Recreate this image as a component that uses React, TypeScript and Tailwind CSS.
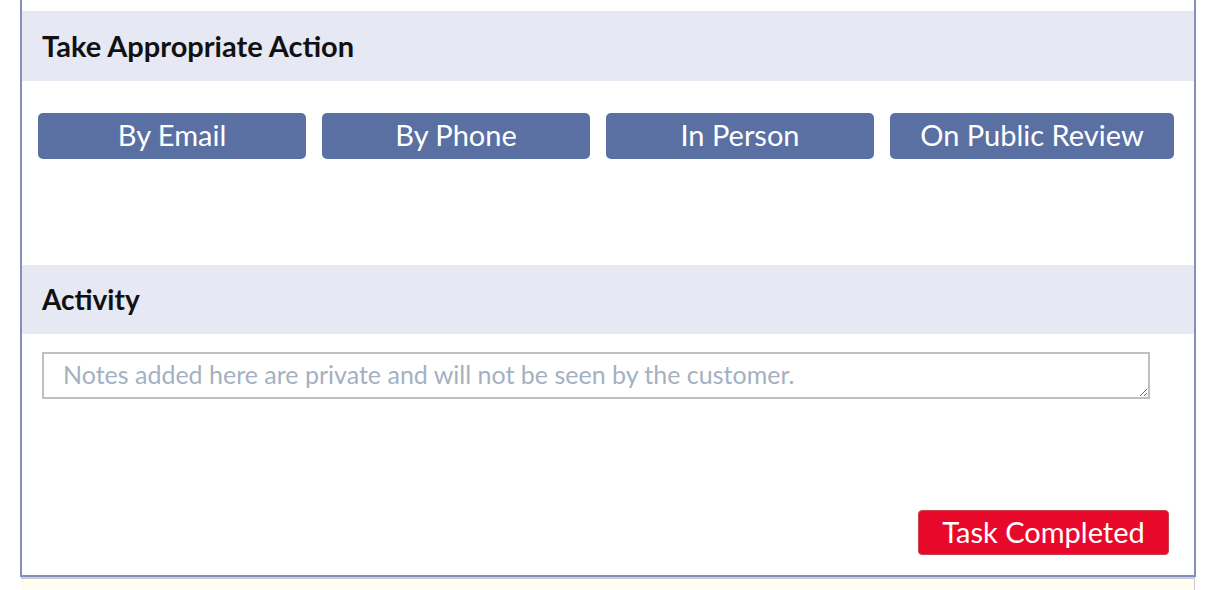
import React from "react";

export default function App() {
  const buttons = ["By Email", "By Phone", "In Person", "On Public Review"];
  return (
    <div className="w-[1220px] h-[590px] bg-white overflow-hidden font-['Lato',sans-serif]">
      <div className="ml-[20px] w-[1176px] border-x-2 border-b-2 border-[#8790b4] pt-[11px] pb-[20px]">
        <div className="h-[70px] bg-[#e6e8f3] pl-[20px] pb-[2px] flex items-center">
          <h2 className="text-[29px] font-bold text-[#111] leading-none">Take Appropriate Action</h2>
        </div>
        <div className="mt-[32px] pl-[16px] pr-[20px] flex">
          {buttons.map((b, i) => (
            <button
              key={b}
              className={`h-[46px] pb-[3px] rounded-[5px] bg-[#5a70a3] text-white text-[29px] leading-none flex items-center justify-center ${
                i < 3 ? "w-[268px] mr-[16px]" : "w-[284px]"
              }`}
            >
              {b}
            </button>
          ))}
        </div>
        <div className="mt-[106px] h-[69px] bg-[#e6e8f3] pl-[20px] pb-[2px] flex items-center">
          <h2 className="text-[28px] font-bold text-[#111] leading-none">Activity</h2>
        </div>
        <div className="mt-[18px] pl-[20px]">
          <textarea
            className="block w-[1108px] h-[47px] border-2 border-[#c0c0c0] px-[19px] pt-[5px] pb-[6px] text-[25px] leading-[30px] text-[#333] placeholder:text-[#a3b1c2] outline-none resize-y"
            placeholder="Notes added here are private and will not be seen by the customer."
          />
        </div>
        <div className="mt-[111px] flex justify-end pr-[25px]">
          <button className="w-[251px] h-[45px] pb-[3px] rounded-[4px] bg-[#e8092a] border border-[#c9404f] text-white text-[29px] leading-none flex items-center justify-center">
            Task Completed
          </button>
        </div>
      </div>
      <div className="ml-[21px] w-[1174px] h-[20px] border-t-2 border-r border-[#c8cbe0] bg-[#fffdee]" />
    </div>
  );
}
